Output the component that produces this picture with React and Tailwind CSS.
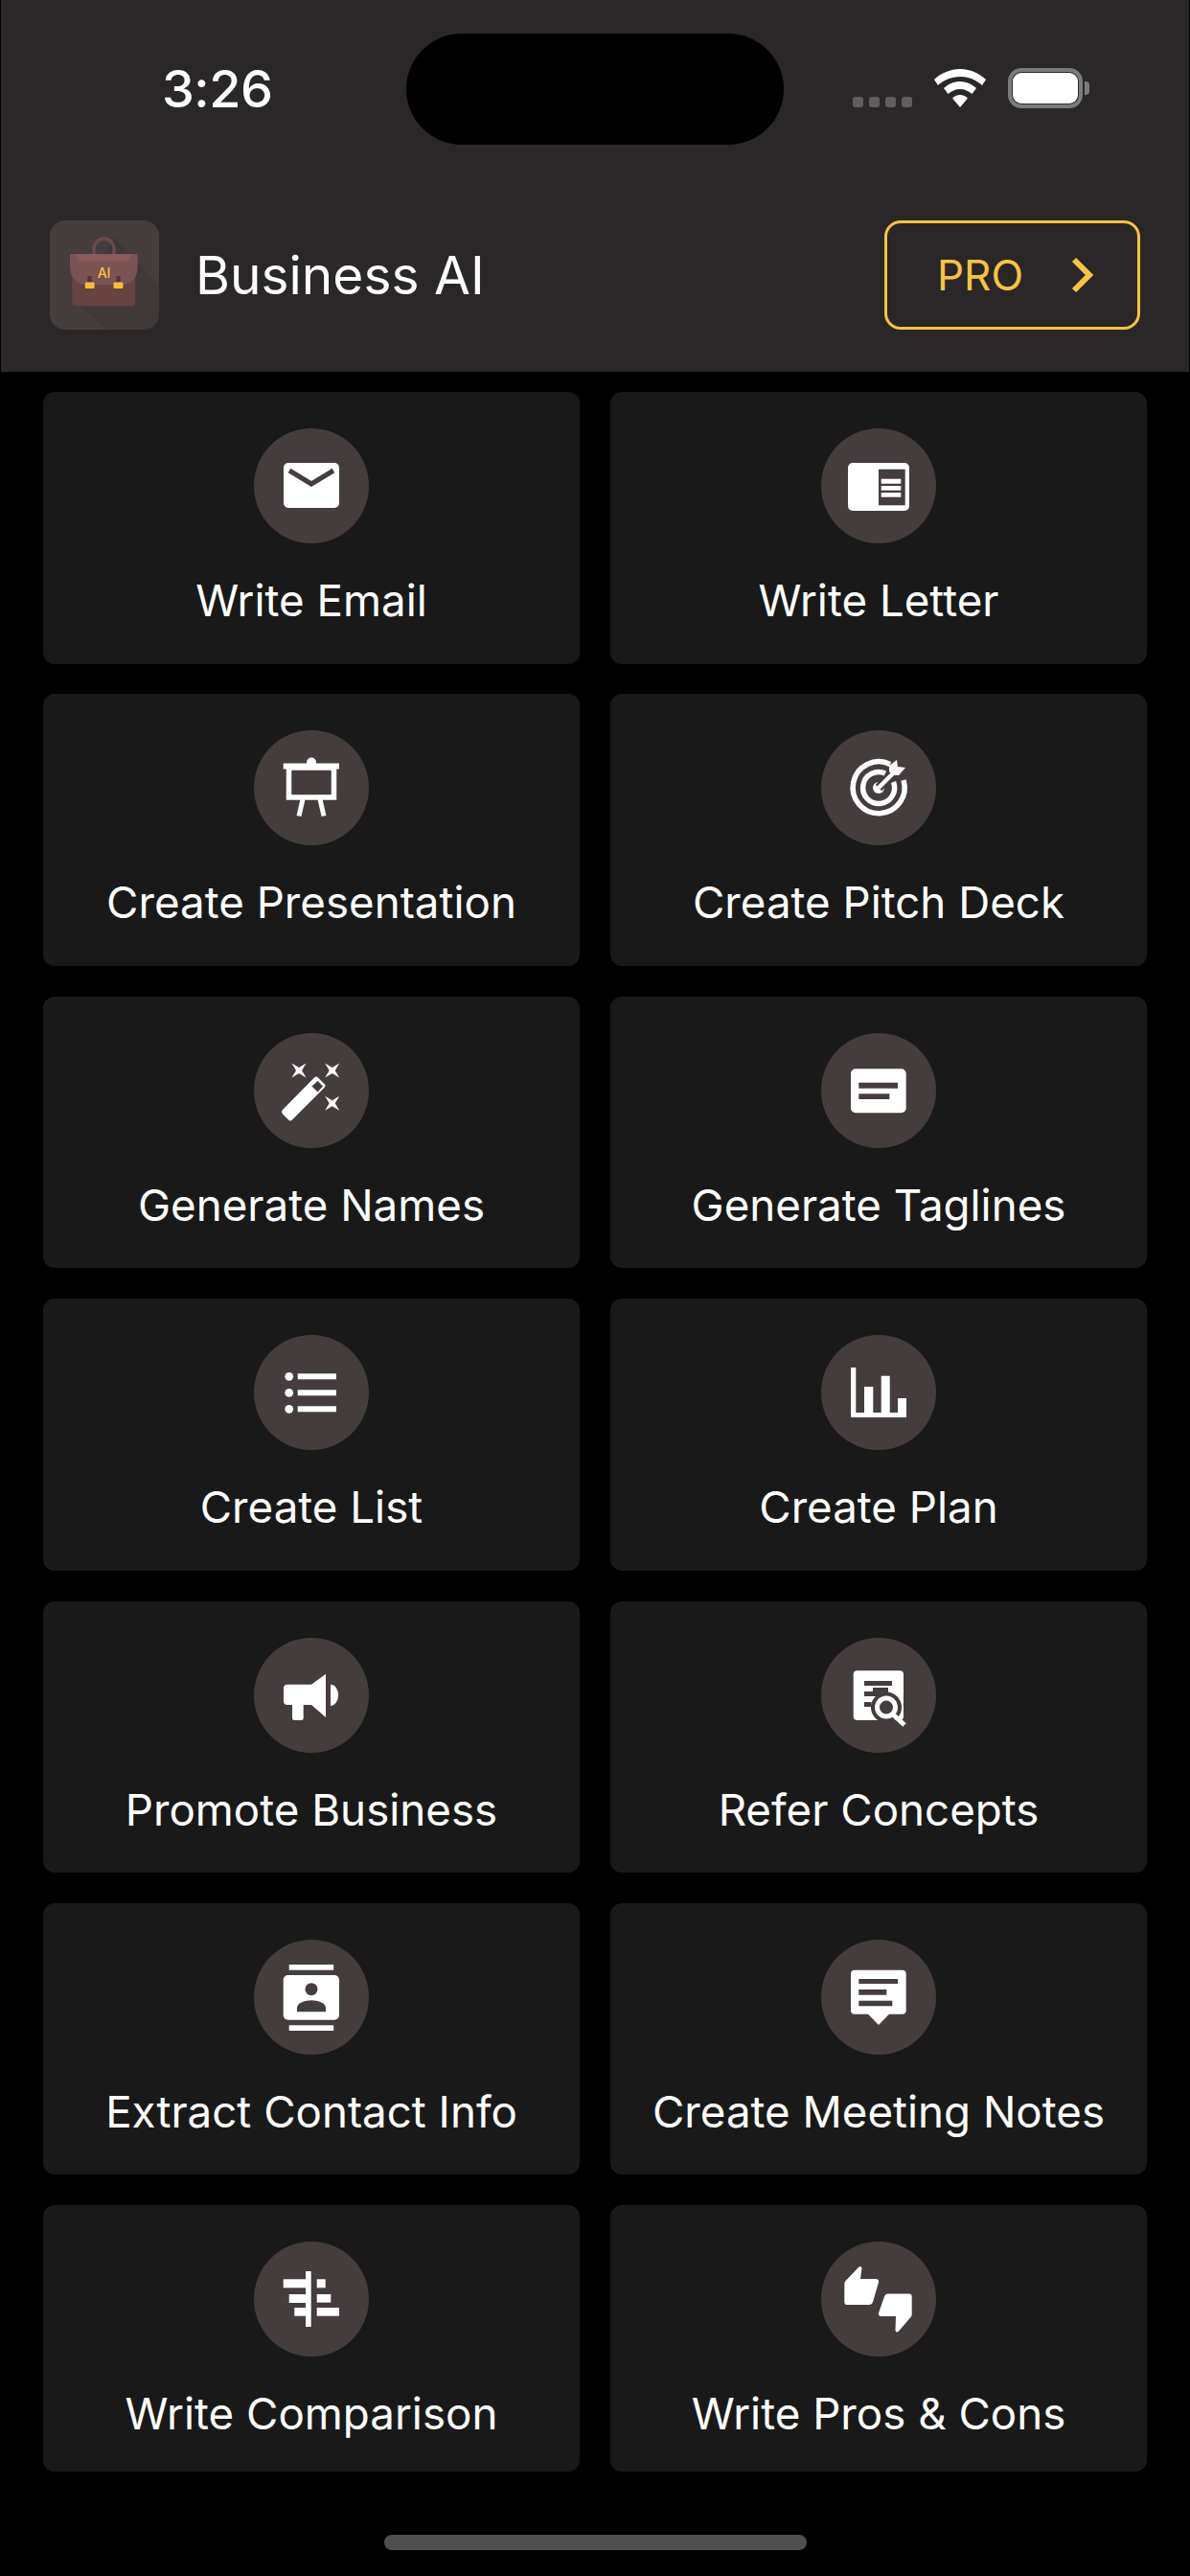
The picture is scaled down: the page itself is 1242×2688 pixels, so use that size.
import React from "react";

const D = "#453c3d";
const W = "#ffffff";

const Star = ({ x, y }) => (
  <path d={`M${x - 7.5},${y - 7.5} L${x},${y - 3} L${x + 7.5},${y - 7.5} L${x + 3},${y} L${x + 7.5},${y + 7.5} L${x},${y + 3} L${x - 7.5},${y + 7.5} L${x - 3},${y} Z`} fill={W} />
);

const icons = {
  email: (
    <>
      <rect x="31" y="36" width="58" height="47" rx="5" fill={W} />
      <path d="M37 44 L60 58 L83 44" fill="none" stroke={D} strokeWidth="5" />
    </>
  ),
  letter: (
    <>
      <rect x="28" y="36" width="64" height="50" rx="5" fill={W} />
      <rect x="60" y="42.7" width="27.7" height="37.6" fill={D} />
      <rect x="62.7" y="52.7" width="20.6" height="5" fill={W} />
      <rect x="62.7" y="60" width="20.6" height="4.7" fill={W} />
      <rect x="62.7" y="67" width="20.6" height="4.7" fill={W} />
    </>
  ),
  present: (
    <>
      <circle cx="60" cy="33.5" r="5" fill={W} />
      <rect x="30.7" y="34.5" width="58.3" height="6" fill={W} />
      <rect x="36.5" y="39" width="47" height="31" fill="none" stroke={W} strokeWidth="5.5" />
      <path d="M51 72 L47 89.5 M69 72 L73 89.5" stroke={W} strokeWidth="5" fill="none" />
    </>
  ),
  target: (
    <>
      <path d="M72 35.500 A27 27 0 1 0 86 52" fill="none" stroke={W} strokeWidth="5.500" />
      <path d="M67 45 A16.500 16.500 0 1 0 75.500 54" fill="none" stroke={W} strokeWidth="5.500" />
      <circle cx="60" cy="60" r="6" fill={W} />
      <path d="M60 60 L78 42" stroke={D} strokeWidth="9" />
      <path d="M60 60 L77 43" stroke={W} strokeWidth="4.5" />
      <path d="M71 43 L71 37 L79 31 L80 38 L88 39 L81 47 L75 47 Z" fill={W} />
    </>
  ),
  wand: (
    <>
      <Star x={47} y={39} />
      <Star x={81.7} y={39} />
      <Star x={81.7} y={73.3} />
      <path d="M30 80 L63 46.5 Q65 44.5 67 46.5 L73.5 53 Q75.5 55 73.5 57 L40 90.5 Q38 92.5 36 90.5 L30 84.5 Q28 82 30 80 Z" fill={W} />
      <path d="M60.5 55.5 L66.5 50 L72 55.5 L66.5 61.5 Z" fill={D} />
    </>
  ),
  tagline: (
    <>
      <rect x="31" y="37.3" width="57.7" height="46" rx="5" fill={W} />
      <rect x="39.3" y="51.7" width="40.7" height="6" fill={D} />
      <rect x="39.3" y="63.3" width="32" height="5.7" fill={D} />
    </>
  ),
  list: (
    <>
      {[43.3, 60.3, 77.3].map((y) => (
        <React.Fragment key={y}>
          <circle cx="36.7" cy={y} r="4.4" fill={W} />
          <rect x="45.7" y={y - 3} width="40.3" height="6" fill={W} />
        </React.Fragment>
      ))}
    </>
  ),
  plan: (
    <>
      <rect x="31" y="34" width="5.3" height="52" fill={W} />
      <rect x="31" y="81" width="58" height="5" fill={W} />
      <rect x="45" y="54" width="9.3" height="30" fill={W} />
      <rect x="62.7" y="42.7" width="9" height="40" fill={W} />
      <rect x="80" y="66" width="9" height="18" fill={W} />
    </>
  ),
  promote: (
    <path
      d="M35 48.7 H60 L75 37.7 V83 L60 70 H51.7 V84 Q51.7 86 49.7 86 H42 Q40 86 40 84 V70 H35 Q31 70 31 66 V52.7 Q31 48.7 35 48.7 Z M80 48.7 A8 11 0 0 1 80 71 Z"
      fill={W}
    />
  ),
  refer: (
    <>
      <rect x="33.7" y="34.3" width="52.3" height="51.7" rx="4" fill={W} />
      <rect x="45" y="45" width="29" height="5" fill={D} />
      <rect x="45" y="56" width="18" height="5" fill={D} />
      <rect x="45" y="67" width="7.5" height="5" fill={D} />
      <circle cx="68" cy="72.6" r="16" fill={D} />
      <rect x="54" y="52" width="16" height="5" fill={D} />
      <circle cx="68" cy="72.6" r="9.5" fill={D} stroke={W} strokeWidth="5" />
      <path d="M75 80 L87 91" stroke={W} strokeWidth="5" />
    </>
  ),
  contact: (
    <>
      <rect x="36.7" y="26" width="46.5" height="5.7" fill={W} />
      <rect x="30.7" y="37" width="58.3" height="46.7" rx="5" fill={W} />
      <rect x="36.7" y="89.3" width="46.5" height="5.7" fill={W} />
      <circle cx="60" cy="51.7" r="6.5" fill={D} />
      <path d="M45 75.3 V71 C45 66 54 63.3 60 63.3 C66 63.3 75 66 75 71 V75.3 Z" fill={D} />
    </>
  ),
  meeting: (
    <>
      <path d="M35 31.7 H84.7 Q88.7 31.7 88.7 35.7 V73.7 Q88.7 77.7 84.7 77.7 H71 L60 89 L49 77.7 H35 Q31 77.7 31 73.7 V35.7 Q31 31.7 35 31.7 Z" fill={W} />
      <rect x="39.3" y="41" width="40.7" height="5" fill={D} />
      <rect x="39.3" y="52" width="29" height="5.7" fill={D} />
      <rect x="39.3" y="63.7" width="35" height="5.6" fill={D} />
    </>
  ),
  compare: (
    <>
      <rect x="54" y="31" width="5.7" height="58" fill={W} />
      <rect x="30.7" y="39.3" width="23.3" height="9" fill={W} />
      <rect x="36.7" y="55" width="17.3" height="9" fill={W} />
      <rect x="42.3" y="69" width="11.7" height="8.7" fill={W} />
      <rect x="65.7" y="39.3" width="9" height="9" fill={W} />
      <rect x="65.7" y="55" width="14.6" height="8.6" fill={W} />
      <rect x="65.7" y="69" width="23.3" height="8.7" fill={W} />
    </>
  ),
  proscons: (
    <>
      <path d="M24.3 44 Q24.3 42 26 40.5 L39 27 Q42 24.5 42.5 28 L41 39 H57 Q60.5 39 60 42.5 L54 63 Q53 66 50 66 H27 Q24.3 66 24.3 63 Z" fill={W} />
      <path d="M94.7 76 Q94.7 78 93 79.5 L81 93.5 Q78 96 77.5 92.5 L78 78 H63 Q59.5 78 60 74.5 L66 57.5 Q67 54.5 70 54.5 H92 Q94.7 54.5 94.7 57.5 Z" fill={W} />
    </>
  ),
};

const tiles = [
  ["Write Email", "email"],
  ["Write Letter", "letter"],
  ["Create Presentation", "present"],
  ["Create Pitch Deck", "target"],
  ["Generate Names", "wand"],
  ["Generate Taglines", "tagline"],
  ["Create List", "list"],
  ["Create Plan", "plan"],
  ["Promote Business", "promote"],
  ["Refer Concepts", "refer"],
  ["Extract Contact Info", "contact"],
  ["Create Meeting Notes", "meeting"],
  ["Write Comparison", "compare"],
  ["Write Pros & Cons", "proscons"],
];

function Tile({ label, icon, last }) {
  return (
    <div
      className={`flex flex-col items-center rounded-[12px] bg-[#191919] pt-[38px] ${last ? "h-[278px]" : "h-[283.5px]"}`}
    >
      <svg viewBox="0 0 120 120" className="h-[120px] w-[120px] shrink-0">
        <circle cx="60" cy="60" r="60" fill={D} />
        {icons[icon]}
      </svg>
      <span className="mt-[32px] text-[45.7px] leading-[56px] font-normal whitespace-nowrap text-white">{label}</span>
    </div>
  );
}

function BagLogo() {
  return (
    <svg viewBox="0 0 114 114" className="h-[114px] w-[114px] shrink-0 rounded-[16px]">
      <rect width="114" height="114" fill="#463d3e" />
      <path d="M68 18 L114 68 V114 H58 L23 80 Z" fill="#403738" />
      <path d="M46 36 V30 A10.5 11 0 0 1 67 30 V36" fill="none" stroke="#704a49" strokeWidth="3.5" />
      <path d="M23.3 50 H89.3 V85 Q89.3 89.3 85 89.3 H27.6 Q23.3 89.3 23.3 85 Z" fill="#674341" />
      <path d="M21 35 H91.7 V47 Q91.7 67 73 67 H40 Q21 67 21 47 Z" fill="#7a5352" />
      <path d="M27 35 H85 Q84 43 76 43 H36 Q28 43 27 35 Z" fill="#8a5b5c" />
      <rect x="39.5" y="58" width="4" height="8" fill="#4f3534" />
      <rect x="69.5" y="58" width="4" height="8" fill="#4f3534" />
      <rect x="36.7" y="64.5" width="10" height="6.5" rx="1.5" fill="#f7bb3f" />
      <rect x="66.5" y="64.5" width="10" height="6.5" rx="1.5" fill="#f7bb3f" />
      <text x="56.5" y="60" textAnchor="middle" fontSize="14" fontWeight="500" fill="#fbc246" fontFamily="Inter, sans-serif">
        AI
      </text>
    </svg>
  );
}

export default function App() {
  return (
    <div className="flex h-[2688px] w-[1242px] flex-col overflow-hidden bg-black font-['Inter',sans-serif]">
      <header className="flex h-[388px] shrink-0 flex-col border-x border-black bg-[#2a2728]">
        <div className="mt-[35px] flex h-[116px] items-stretch pl-[168px]">
          <span className="mt-[28px] h-[60px] w-[255px] text-[54px] leading-[60px] font-medium tracking-[-0.5px] text-white">3:26</span>
          <div className="h-[116px] w-[394px] rounded-[58px] bg-black" />
          <div className="ml-[72px] flex items-start">
            <div className="mt-[66px] flex gap-[6px]">
              {[0, 1, 2, 3].map((i) => (
                <span key={i} className="h-[11px] w-[11px] rounded-[3px] bg-[#5f5d5e]" />
              ))}
            </div>
            <svg viewBox="0 0 54 40" className="mt-[37px] ml-[23px] h-[40px] w-[54px]">
              <path d="M27 0 C37 0 46.5 4 54 11 L50 17 C44 11.500 36 8 27 8 C18 8 10 11.500 4 17 L0 11 C7.500 4 17 0 27 0 Z" fill={W} />
              <path d="M27 13 C33 13 39 15.500 44 20 L39.500 26 C36 23 32 21 27 21 C22 21 18 23 14.500 26 L10 20 C15 15.500 21 13 27 13 Z" fill={W} />
              <path d="M27 27 C30 27 33 28.500 35 30.500 L27 40 L19 30.500 C21 28.500 24 27 27 27 Z" fill={W} />
            </svg>
            <div className="mt-[36px] ml-[23px] flex items-center">
              <div className="flex h-[42px] w-[78px] items-center justify-center rounded-[14px] border-[4px] border-[#7c7b7b] p-[1px]">
                <div className="h-full w-full rounded-[9px] bg-white" />
              </div>
              <div className="ml-[2px] h-[14px] w-[5px] rounded-r-[4px] bg-[#7c7b7b]" />
            </div>
          </div>
        </div>
        <div className="mt-[79px] flex h-[114px] items-center pr-[51px] pl-[51px]">
          <BagLogo />
          <span className="ml-[38px] text-[55px] leading-[64px] font-normal text-white">Business AI</span>
          <div className="ml-auto flex h-[114px] w-[267px] items-center rounded-[17px] border-[3px] border-[#fbc246] pl-[52px]">
            <span className="text-[44px] leading-[54px] font-normal text-[#fbc246]">PRO</span>
            <svg viewBox="0 0 24 38" className="ml-[49px] h-[38px] w-[24px]">
              <path d="M4 3 L20 19 L4 35" fill="none" stroke="#fbc246" strokeWidth="6" />
            </svg>
          </div>
        </div>
      </header>
      <main className="mt-[21px] grid grid-cols-2 gap-x-[32px] gap-y-[31.9px] px-[45px]">
        {tiles.map(([label, icon], i) => (
          <Tile key={label} label={label} icon={icon} last={i >= 12} />
        ))}
      </main>
      <div className="mt-[66px] flex justify-center">
        <div className="h-[16px] w-[441px] rounded-full bg-[#4f4f4f]" />
      </div>
    </div>
  );
}
